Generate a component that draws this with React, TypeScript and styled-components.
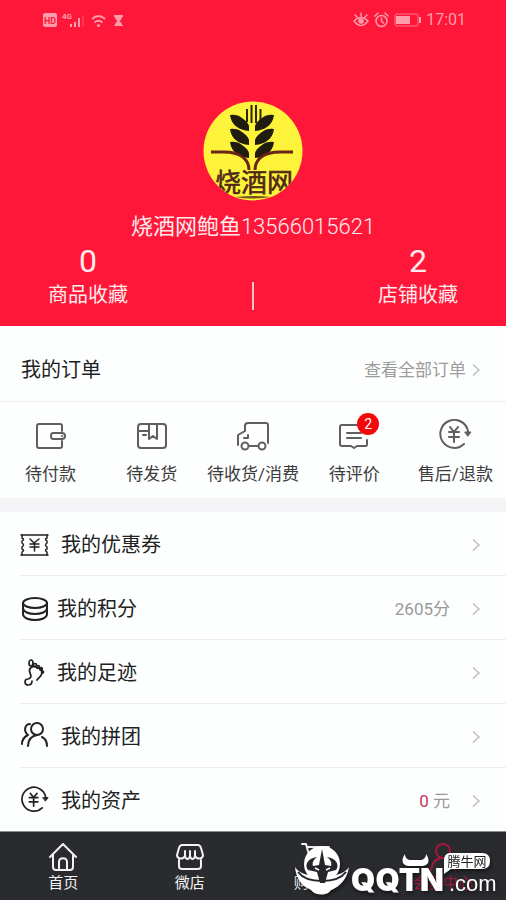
import React from 'react';
import styled, { createGlobalStyle } from 'styled-components';

const GlobalStyle = createGlobalStyle`
  * { box-sizing: border-box; }
  body {
    margin: 0;
    background: #f5f5f7;
    color: #222;
    font-family: Roboto, "Noto Sans CJK SC", sans-serif;
  }
  a { color: inherit; text-decoration: none; }
  svg { display: block; flex: none; }
`;

const Page = styled.div`
  display: flex;
  flex-direction: column;
  min-height: 100vh;
`;

const Header = styled.header`
  display: flex;
  flex-direction: column;
  background: #ff173a;
  color: #ffeaec;
  padding-bottom: 16px;
`;

const StatusBar = styled.div`
  display: flex;
  align-items: center;
  justify-content: space-between;
  height: 40px;
  padding: 0 40px 0 43px;
  color: #ff9dab;
`;

const StatusGroup = styled.div`
  display: flex;
  align-items: center;
  gap: 5px;
  font-size: 16px;
  line-height: 20px;
`;

const Avatar = styled.div`
  align-self: center;
  margin-top: 61px;
`;

const UserName = styled.h1`
  margin: 11px 0 0;
  text-align: center;
  font-size: 22px;
  line-height: 30px;
  font-weight: 400;
`;

const Phone = styled.span`
  font-weight: 300;
`;

const Favorites = styled.div`
  display: grid;
  grid-template-columns: 1fr 2px 1fr;
  align-items: end;
`;

const Favorite = styled.a<{ $side: 'left' | 'right' }>`
  justify-self: ${(p) => (p.$side === 'left' ? 'start' : 'end')};
  display: flex;
  flex-direction: column;
  align-items: center;
  padding: 0 48px;
  font-size: 20px;
  line-height: 30px;
`;

const FavoriteCount = styled.span`
  font-size: 32px;
  line-height: 38px;
`;

const FavoriteDivider = styled.div`
  height: 28px;
  background: #ffc3ca;
`;

const OrderHeader = styled.section`
  display: flex;
  align-items: center;
  justify-content: space-between;
  min-height: 76px;
  padding: 12px 26px 0 21px;
  background: #fdfefe;
  border-bottom: 1px solid #eeeef0;
`;

const SectionTitle = styled.h2`
  margin: 0;
  font-size: 20px;
  line-height: 30px;
  font-weight: 400;
`;

const MoreLink = styled.a`
  display: flex;
  align-items: center;
  gap: 6px;
  font-size: 17px;
  line-height: 30px;
  color: #9b9b9b;
`;

const Tiles = styled.nav`
  display: grid;
  grid-template-columns: repeat(5, 1fr);
  background: #fdfefe;
  padding: 17px 0 10px;
  margin-bottom: 14px;
`;

const Tile = styled.a`
  display: flex;
  flex-direction: column;
  align-items: center;
  gap: 7px;
  font-size: 17px;
  line-height: 28px;
  white-space: nowrap;
  color: #3c3c3c;
`;

const TileIcon = styled.span`
  position: relative;
  color: #5f5f5f;
`;

const Badge = styled.span`
  position: absolute;
  top: -6px;
  right: -8px;
  width: 22px;
  height: 22px;
  border-radius: 50%;
  background: #f20808;
  color: #fff;
  font-size: 14px;
  line-height: 22px;
  text-align: center;
`;

const Menu = styled.ul`
  flex: 1;
  margin: 0;
  padding: 0 0 0 20px;
  list-style: none;
  background: #fdfefe;
`;

const MenuItem = styled.li`
  border-bottom: 1px solid #eeeef0;
  &:last-child { border-bottom: 0; }
`;

const MenuLink = styled.a`
  display: flex;
  align-items: center;
  min-height: 63px;
  padding: 3px 26px 0 0;
  font-size: 20px;
  line-height: 30px;
`;

const MenuLabel = styled.span<{ $compact?: boolean }>`
  padding-left: ${(p) => (p.$compact ? '8px' : '12px')};
`;

const MenuValue = styled.span`
  margin-left: auto;
  padding-right: 22px;
  font-size: 17px;
  color: #999;
`;

const Amount = styled.span`
  color: #c2375a;
`;

const TabBar = styled.nav`
  position: relative;
  display: grid;
  grid-template-columns: repeat(4, 1fr);
  min-height: 69px;
  padding: 10px 0 5px;
  background: #2a2b2f;
  border-top: 1px solid #8a8c8c;
`;

const Tab = styled.a<{ $active?: boolean }>`
  display: flex;
  flex-direction: column;
  align-items: center;
  font-size: 15px;
  line-height: 22px;
  color: ${(p) => (p.$active ? '#a3183a' : '#f2f2f2')};
`;

const SiteMark = styled.div`
  position: absolute;
  right: 6px;
  bottom: 0;
  pointer-events: none;
  filter: drop-shadow(1px 2px 2px rgba(0, 0, 0, 0.55));
`;

const line = {
  fill: 'none',
  stroke: 'currentColor',
  strokeWidth: 2,
  strokeLinecap: 'round' as const,
  strokeLinejoin: 'round' as const,
};

const Chevron = () => (
  <svg width="8" height="14" viewBox="0 0 8 14" color="#bdbdbd" {...line} strokeWidth={1.5} strokeLinecap="butt" strokeLinejoin="miter">
    <path d="M1 1.5 7 7 1 12.5" />
  </svg>
);

const SignalIcons = () => (
  <svg width="82" height="20" viewBox="0 0 82 20" fill="currentColor" aria-hidden="true">
    <rect x="0" y="3" width="14" height="14" rx="2" />
    <text x="7" y="13.5" textAnchor="middle" fontSize="9" fontWeight="700" fill="#ff173a">HD</text>
    <text x="19" y="9" fontSize="8" fontWeight="700">4G</text>
    <path d="M27 14h2v3h-2zM31 12h2v5h-2zM35 8h2v9h-2z" />
    <path d="M39 6h2v11h-2z" opacity=".25" />
    <g fill="none" stroke="currentColor" strokeWidth="1.8">
      <path d="M49 9q6.500-6 13 0M51.500 12.500q4-3.500 8 0" />
    </g>
    <circle cx="55.500" cy="15.500" r="1.600" />
    <path d="M71 5h9v2h-1c0 2-1.500 3-2.500 4 1 1 2.500 2 2.500 4h1v1h-9v-1h1c0-2 1.500-3 2.500-4-1-1-2.500-2-2.500-4h-1z" />
  </svg>
);

const EyeIcon = () => (
  <svg width="16" height="16" viewBox="0 0 16 16" {...line} strokeWidth={1.5} aria-hidden="true">
    <path d="M1 9q7-7 14 0-7 9-14 0ZM2 3l2 2M8 1v3M14 3l-2 2" />
    <circle cx="8" cy="9" r="2" fill="currentColor" />
  </svg>
);

const AlarmIcon = () => (
  <svg width="15" height="16" viewBox="0 0 15 16" {...line} strokeWidth={1.5} aria-hidden="true">
    <circle cx="7.500" cy="9" r="5.500" />
    <path d="M7.500 6v3l2 2M1 4l3-3M14 4l-3-3" />
  </svg>
);

const BatteryIcon = () => (
  <svg width="27" height="14" viewBox="0 0 27 14" aria-hidden="true">
    <rect x="1" y="1" width="23" height="12" rx="2" fill="none" stroke="currentColor" opacity=".7" />
    <rect x="2" y="3" width="14" height="8" fill="currentColor" />
    <path d="M25 4h2v6h-2z" fill="currentColor" />
  </svg>
);

const AvatarLogo = () => (
  <svg width="100" height="100" viewBox="0 0 100 100" role="img" aria-label="烧酒网">
    <defs>
      <clipPath id="disc"><circle cx="50" cy="50" r="49.500" /></clipPath>
    </defs>
    <g clipPath="url(#disc)">
      <rect width="100" height="100" fill="#fcf33a" />
      <g fill="none" stroke="#2d280c" strokeWidth="2">
        <path d="M44 8v13M48.500 4v18M53 4v18M57.500 8v13" />
      </g>
      <g fill="#201c10">
        <path d="M27 14q7-1 12 3 6 4 7 8v5q-8-1-12-4-6-4-7-12Z" />
        <path d="M27 28q7-1 12 3 6 4 7 8v5q-8-1-12-4-6-4-7-12Z" />
        <path d="M27 41q7-1 12 3 6 4 7 8v5q-8-1-12-4-6-4-7-12Z" />
        <path d="M71 14q-7-1-12 3-6 4-7 8v5q8-1 12-4 6-4 7-12Z" />
        <path d="M71 28q-7-1-12 3-6 4-7 8v5q8-1 12-4 6-4 7-12Z" />
        <path d="M71 41q-7-1-12 3-6 4-7 8v5q8-1 12-4 6-4 7-12Z" />
      </g>
      <g fill="none" stroke="#6b2416" strokeWidth="3">
        <path d="M8 51h13c16 0 25 7 25 18M90 51H77c-16 0-25 7-25 18" />
      </g>
      <text x="51" y="91" textAnchor="middle" fontSize="26" fontWeight="400" fill="#4f2817" stroke="#4f2817" strokeWidth=".6" fontFamily='"Noto Sans CJK SC", sans-serif'>烧酒网</text>
      <path d="M32 96q20-2 36 0-18 3-36 0Z" fill="#74501c" />
    </g>
  </svg>
);

const WalletIcon = () => (
  <svg width="34" height="34" viewBox="0 0 34 34" {...line}>
    <path d="M28 12V7q0-2-2-2H5Q3 5 3 7v20q0 2 2 2h21q2 0 2-2v-5" />
    <path d="M19 14h9q3 0 3 3t-3 3h-9q-2 0-2-3t2-3Z" />
    <path d="M28 17h0" />
  </svg>
);

const BoxIcon = () => (
  <svg width="34" height="34" viewBox="0 0 34 34" {...line}>
    <rect x="3" y="5" width="28" height="24" rx="3" />
    <path d="M3 12h11M14 5v15l4-3 4 3V5M8 16h3" />
  </svg>
);

const TruckIcon = () => (
  <svg width="34" height="34" viewBox="0 0 34 34" {...line}>
    <path d="M2 26V16l7-4V7q0-3 3-3h18q2 0 2 2v18M13 27h9M12 16v3H8" />
    <circle cx="9" cy="27" r="3.500" />
    <circle cx="26" cy="27" r="3.500" />
  </svg>
);

const CommentIcon = () => (
  <svg width="34" height="34" viewBox="0 0 34 34" {...line}>
    <path d="M20 6H5Q3 6 3 8v17q0 2 2 2h9l3 2 3-2h9q1 0 1-2v-4M10 14h14M10 19h14" />
  </svg>
);

const RefundIcon = ({ size = 34, y = 34 }: { size?: number; y?: number }) => (
  <svg width={size} height={y} viewBox="0 0 34 34" {...line}>
    <path d="M26 25A14 14 0 1 1 30 12v2" />
    <path d="M27 13h6l-3 4Z" fill="currentColor" strokeWidth="1" />
    <path d="m12 8 4 5 4-5M11 13h10M11 18h10M16 13v10" />
  </svg>
);

const CouponIcon = () => (
  <svg width="29" height="30" viewBox="0 0 29 30" {...line} strokeWidth={1.500}>
    <path d="M1 5h27M1 25h27" />
    <path d="M2 5v3q3 1 0 3v2q3 2 0 4v2q3 1 0 3v3M27 5v3q-3 1 0 3v2q-3 2 0 4v2q-3 1 0 3v3" />
    <path d="m10 9 4 4 5-4M10 14h9M10 17h9M14.500 13v8" />
  </svg>
);

const CoinsIcon = () => (
  <svg width="29" height="30" viewBox="0 0 29 30" {...line}>
    <ellipse cx="15" cy="9" rx="12" ry="5" />
    <path d="M3 9v11c0 8 24 8 24 0V9M3 14c0 8 24 8 24 0" />
  </svg>
);

const FootIcon = () => (
  <svg width="29" height="30" viewBox="0 0 29 30" {...line} strokeWidth={1.700}>
    <path d="M12 23c0 3-2 4-4 4-4 0-4-6 0-6 4-1 3-4 2-6-2-5 2-7 6-6 4 0 7 3 6 6-1 4-3 4-5 7" />
    <ellipse cx="11" cy="5" rx="2" ry="3" />
    <circle cx="15" cy="7" r="1.500" />
    <circle cx="18" cy="9" r="1.500" />
    <circle cx="21" cy="11" r="1.300" />
    <circle cx="22.500" cy="14" r="1" />
  </svg>
);

const GroupIcon = () => (
  <svg width="29" height="34" viewBox="0 0 29 34" {...line}>
    <circle cx="17" cy="9" r="6" />
    <path d="M8 26c0-7 4-10 9-11M22 17c4 2 5 5 5 9M10 4c-5 0-7 7-2 11-4 2-6 5-6 9" />
  </svg>
);

const HomeIcon = () => (
  <svg width="30" height="30" viewBox="0 0 30 30" {...line}>
    <path d="M2 15 15 2l13 13M5 13v12q0 3 3 3h14q3 0 3-3V13M11 28v-8c0-5 8-5 8 0v8" />
  </svg>
);

const ShopIcon = () => (
  <svg width="30" height="30" viewBox="0 0 30 30" {...line}>
    <path d="M7 3h16q2 0 3 3l2 7c0 4-6 5-8 1-1 4-4 4-5 0-1 4-4 4-5 0-2 4-8 3-8-1l2-7q1-3 3-3ZM4 18v6q0 3 3 3h16q3 0 3-3v-6M10 9v5M15 9v5M20 9v5" />
  </svg>
);

const CartIcon = () => (
  <svg width="30" height="30" viewBox="0 0 30 30" {...line}>
    <path d="M1 2h4l5 18h15l3-15H6" />
    <circle cx="12" cy="25" r="2" />
    <circle cx="23" cy="25" r="2" />
  </svg>
);

const MemberIcon = () => (
  <svg width="30" height="30" viewBox="0 0 30 30" {...line}>
    <circle cx="15" cy="9" r="7" />
    <path d="M3 28c1-7 5-12 12-12s11 5 12 12" />
  </svg>
);

const SiteLogo = () => (
  <svg width="206" height="56" viewBox="0 0 206 56" role="img" aria-label="腾牛网 QQTN.com">
    <circle cx="28" cy="20" r="18" fill="#fff" />
    <path d="M1 23c7 13 47 13 54 0-2 13-10 20-18 23-3 6-16 6-20 0C8 42 2 35 1 23Z" fill="#fff" />
    <path d="M4 28c9 12 39 12 48 0" fill="none" stroke="#25262a" strokeWidth="2" />
    <path d="M28 5 25 21l-6 1c-1-3 0-6 4-9-9 1-13 8-9 13l9 2 3 11h5l3-11 8-2c4-5 0-12-9-13 4 3 5 6 4 9l-6-1Z" fill="#25262a" />
    <path d="m21 24 4 2M36 24l-4 2" stroke="#fff" strokeWidth="1.500" />
    <path d="M111 10c-5 7-2 12 4 12h13c6 0 9-5 4-12 0 4-3 6-6 6h-9c-3 0-6-2-6-6Z" fill="#fff" />
    <text x="57" y="47" fontFamily="Inter, sans-serif" fontSize="31" fontWeight="900" fill="#fff">QQTN</text>
    <text x="155" y="47" fontFamily='"Liberation Sans", sans-serif' fontSize="22" fill="#fff">.com</text>
    <path d="M156 9h32q8 0 8 8t-8 8h-31l-7 5v-13q0-8 6-8Z" fill="#fff" />
    <text x="173" y="22" textAnchor="middle" fontFamily='"Noto Sans CJK SC", sans-serif' fontSize="13" fill="#222">腾牛网</text>
  </svg>
);

const tiles = [
  { label: '待付款', icon: <WalletIcon /> },
  { label: '待发货', icon: <BoxIcon /> },
  { label: '待收货/消费', icon: <TruckIcon /> },
  { label: '待评价', icon: <CommentIcon />, badge: 2 },
  { label: '售后/退款', icon: <RefundIcon /> },
];

const menu = [
  { label: '我的优惠券', icon: <CouponIcon /> },
  { label: '我的积分', icon: <CoinsIcon />, compact: true, value: '2605分' },
  { label: '我的足迹', icon: <FootIcon />, compact: true },
  { label: '我的拼团', icon: <GroupIcon /> },
  { label: '我的资产', icon: <RefundIcon size={29} y={36} />, value: <><Amount>0</Amount> 元</> },
];

const tabs = [
  { label: '首页', icon: <HomeIcon /> },
  { label: '微店', icon: <ShopIcon /> },
  { label: '购物车', icon: <CartIcon /> },
  { label: '会员中心', icon: <MemberIcon />, active: true },
];

export default function App() {
  return (
    <Page>
      <GlobalStyle />
      <Header>
        <StatusBar>
          <SignalIcons />
          <StatusGroup>
            <EyeIcon />
            <AlarmIcon />
            <BatteryIcon />
            <span>17:01</span>
          </StatusGroup>
        </StatusBar>
        <Avatar><AvatarLogo /></Avatar>
        <UserName>烧酒网鲍鱼<Phone>13566015621</Phone></UserName>
        <Favorites>
          <Favorite href="#goods" $side="left"><FavoriteCount>0</FavoriteCount>商品收藏</Favorite>
          <FavoriteDivider />
          <Favorite href="#shops" $side="right"><FavoriteCount>2</FavoriteCount>店铺收藏</Favorite>
        </Favorites>
      </Header>
      <OrderHeader>
        <SectionTitle>我的订单</SectionTitle>
        <MoreLink href="#orders">查看全部订单 <Chevron /></MoreLink>
      </OrderHeader>
      <Tiles>
        {tiles.map((t) => (
          <Tile href="#orders" key={t.label}>
            <TileIcon>{t.icon}{t.badge && <Badge>{t.badge}</Badge>}</TileIcon>
            {t.label}
          </Tile>
        ))}
      </Tiles>
      <Menu>
        {menu.map((m) => (
          <MenuItem key={m.label}>
            <MenuLink href="#menu">
              {m.icon}
              <MenuLabel $compact={m.compact}>{m.label}</MenuLabel>
              <MenuValue>{m.value}</MenuValue>
              <Chevron />
            </MenuLink>
          </MenuItem>
        ))}
      </Menu>
      <TabBar>
        {tabs.map((t) => (
          <Tab href="#tab" key={t.label} $active={t.active}>
            {t.icon}
            {t.label}
          </Tab>
        ))}
        <SiteMark><SiteLogo /></SiteMark>
      </TabBar>
    </Page>
  );
}
